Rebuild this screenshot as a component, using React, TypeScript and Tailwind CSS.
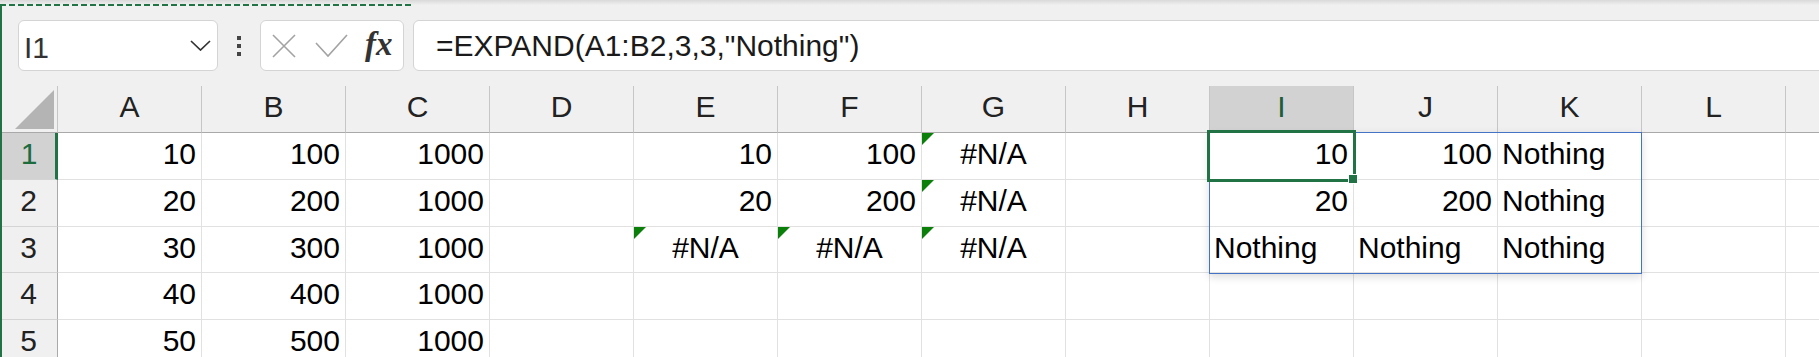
type Align = "left" | "right" | "center";

interface CellData {
  value: string;
  align: Align;
  error?: boolean;
}

const columns = ["A", "B", "C", "D", "E", "F", "G", "H", "I", "J", "K", "L", "M"];
const rowHeights = ["h-[47px]", "h-[47px]", "h-[46px]", "h-[47px]", "h-[47px]"];

const num = (value: string): CellData => ({ value, align: "right" });
const text = (value: string): CellData => ({ value, align: "left" });
const na: CellData = { value: "#N/A", align: "center", error: true };

const rows: Record<string, CellData>[] = [
  { A: num("10"), B: num("100"), C: num("1000"), E: num("10"), F: num("100"), G: na, I: num("10"), J: num("100"), K: text("Nothing") },
  { A: num("20"), B: num("200"), C: num("1000"), E: num("20"), F: num("200"), G: na, I: num("20"), J: num("200"), K: text("Nothing") },
  { A: num("30"), B: num("300"), C: num("1000"), E: na, F: na, G: na, I: text("Nothing"), J: text("Nothing"), K: text("Nothing") },
  { A: num("40"), B: num("400"), C: num("1000") },
  { A: num("50"), B: num("500"), C: num("1000") },
];

const alignClass: Record<Align, string> = {
  left: "justify-start pl-[4px]",
  right: "justify-end pr-[5px]",
  center: "justify-center",
};

const Toolbar = () => (
  <div className="flex items-start h-[86px] pt-[20px] pl-[18px] bg-[linear-gradient(to_bottom,#d9d9d9_0px,#f0f0f0_5px)]">
    {/* name box */}
    <div className="flex items-center justify-between w-[200px] h-[51px] pl-[5px] pr-[6px] pt-[4px] bg-white border border-[#d4d4d4] rounded-[6px]">
      <span className="text-[30px] leading-none text-[#333]">I1</span>
      <svg width="21" height="11" viewBox="0 0 21 11" className="-mt-[4px]">
        <path d="M1 1 L10.5 10 L20 1" fill="none" stroke="#333" strokeWidth="1.7" />
      </svg>
    </div>

    <div className="flex flex-col items-center justify-center gap-[4px] w-[42px] h-[51px]">
      <div className="w-[4px] h-[4px] bg-[#444]" />
      <div className="w-[4px] h-[4px] bg-[#444]" />
      <div className="w-[4px] h-[4px] bg-[#444]" />
    </div>

    {/* cancel / enter / fx */}
    <div className="flex items-center w-[144px] h-[51px] pl-[10px] bg-white border border-[#d4d4d4] rounded-[6px]">
      <svg width="26" height="24" viewBox="0 0 26 24">
        <path d="M2 1 L24 23 M24 1 L2 23" stroke="#a3a3a3" strokeWidth="1.6" fill="none" />
      </svg>
      <svg width="33" height="24" viewBox="0 0 33 24" className="ml-[18px]">
        <polyline points="1,9 13,22 32,1" stroke="#a3a3a3" strokeWidth="1.6" fill="none" />
      </svg>
      <span className="ml-[17px] -mt-[2px] font-['Liberation_Serif',serif] italic font-bold text-[33px] leading-none text-[#333]">
        fx
      </span>
    </div>

    {/* formula */}
    <div className="flex items-center flex-1 h-[51px] ml-[9px] -mr-[20px] pl-[22px] bg-white border border-[#d4d4d4] rounded-[6px]">
      <span className="text-[30px] leading-none text-[#1a1a1a]">=EXPAND(A1:B2,3,3,"Nothing")</span>
    </div>
  </div>
);

const HeaderRow = () => (
  <div className="flex h-[47px]">
    <div className="flex items-end justify-end w-[58px] shrink-0 pr-[3px] pb-[3px] border-r border-b border-r-[#c6c6c6] border-b-[#a9a9a9]">
      <div className="w-[39px] h-[39px] bg-[#b4b4b4] [clip-path:polygon(100%_0,100%_100%,0_100%)]" />
    </div>
    {columns.map((col) => (
      <div
        key={col}
        className={`flex items-center justify-center w-[144px] shrink-0 pb-1 border-r border-b border-r-[#c6c6c6] border-b-[#a9a9a9] text-[30px] leading-none ${
          col === "I" ? "bg-[#d2d2d2] text-[#1e5e37]" : "text-[#222]"
        }`}
      >
        {/* M only peeks in at the right edge, its letter is off screen */}
        {col === "M" ? "" : col}
      </div>
    ))}
  </div>
);

const SheetRow = ({ index, data }: { index: number; data: Record<string, CellData> }) => {
  const active = index === 0;
  return (
    <div className={`flex ${rowHeights[index]}`}>
      <div
        className={`flex items-center justify-center w-[58px] shrink-0 pb-1 border-b border-b-[#d4d4d4] text-[30px] leading-none ${
          active
            ? "bg-[#d2d2d2] border-r-[3px] border-r-[#217346] pl-[3px] text-[#1e6b3e]"
            : "bg-[#f0f0f0] border-r border-r-[#a9a9a9] text-[#222]"
        }`}
      >
        {index + 1}
      </div>
      {columns.map((col) => {
        const cell = data[col];
        return (
          <div
            key={col}
            className={`relative flex items-center w-[144px] shrink-0 pb-1 bg-white border-r border-b border-[#e1e1e1] text-[30px] leading-none text-black ${
              cell ? alignClass[cell.align] : ""
            }`}
          >
            {cell?.error && (
              <div className="absolute top-0 left-0 w-[12px] h-[12px] bg-[#0a7f0a] [clip-path:polygon(0_0,100%_0,0_100%)]" />
            )}
            {cell?.value}
          </div>
        );
      })}
    </div>
  );
};

export default function App() {
  return (
    <div className="relative w-[1819px] h-[357px] overflow-hidden bg-[#f0f0f0] font-['Liberation_Sans',sans-serif]">
      <Toolbar />
      <HeaderRow />
      {rows.map((data, i) => (
        <SheetRow key={i} index={i} data={data} />
      ))}

      {/* copy marquee */}
      <div className="absolute top-[4px] left-0 w-[413px] h-[2px] bg-[repeating-linear-gradient(90deg,#217346_0_6px,transparent_6px_9px)]" />
      <div className="absolute top-[4px] bottom-0 left-0 w-[2px] bg-[#217346]" />

      {/* spill range */}
      <div className="absolute left-[1209px] top-[132px] w-[433px] h-[142px] border border-[#4472c4] shadow-[0_3px_8px_rgba(0,0,0,0.14)] pointer-events-none" />

      {/* active cell */}
      <div className="absolute left-[1207px] top-[130px] w-[149px] h-[52px] border-[3px] border-[#217346] pointer-events-none" />
      <div className="absolute left-[1348px] top-[174px] w-[10px] h-[10px] bg-[#217346] border border-white pointer-events-none" />
    </div>
  );
}
